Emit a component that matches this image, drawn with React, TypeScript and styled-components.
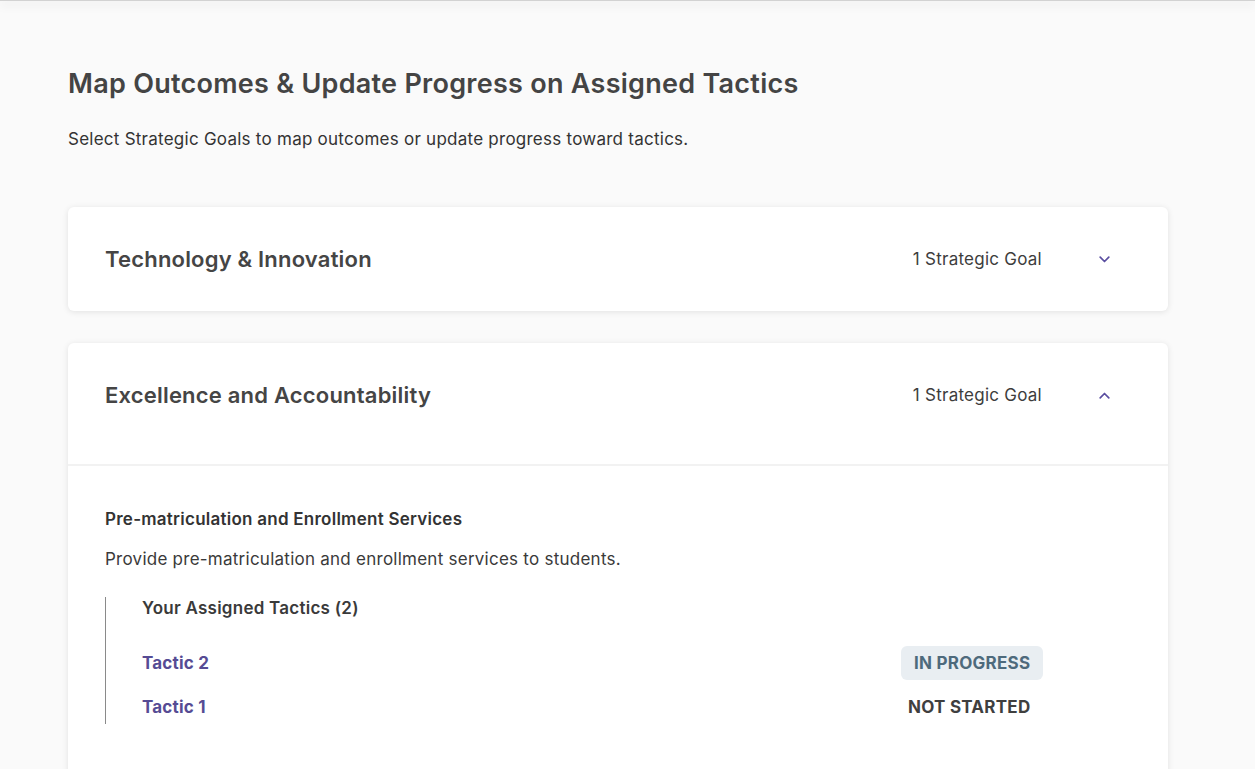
import React from 'react';
import styled, { createGlobalStyle } from 'styled-components';

const GlobalStyle = createGlobalStyle`
  html, body {
    margin: 0;
    padding: 0;
    background: #fafafa;
    font-family: Inter, 'Noto Sans', sans-serif;
    color: #3f3f3f;
  }
`;

type Tactic = { name: string; status: 'in-progress' | 'not-started' };

const tactics: Tactic[] = [
  { name: 'Tactic 2', status: 'in-progress' },
  { name: 'Tactic 1', status: 'not-started' },
];

const Chevron = ({ up }: { up?: boolean }) => (
  <svg width='11' height='7' viewBox='0 0 11 7' fill='none'>
    <path
      d={up ? 'M1.2 5.8 L5.5 1.5 L9.8 5.8' : 'M1.2 1.2 L5.5 5.5 L9.8 1.2'}
      stroke='#5a4ea0'
      strokeWidth='1.7'
      strokeLinecap='round'
      strokeLinejoin='round'
    />
  </svg>
);

const App = () => {
  return (
    <>
      <GlobalStyle />
      <TopShadow />
      <Page>
        <Title>Map Outcomes &amp; Update Progress on Assigned Tactics</Title>
        <SubTitle>Select Strategic Goals to map outcomes or update progress toward tactics.</SubTitle>

        <Card>
          <CardHeader>
            <CardTitle>Technology &amp; Innovation</CardTitle>
            <HeaderRight>
              <GoalCount>1 Strategic Goal</GoalCount>
              <ChevronBox>
                <Chevron />
              </ChevronBox>
            </HeaderRight>
          </CardHeader>
        </Card>

        <Card>
          <CardHeader>
            <CardTitle>Excellence and Accountability</CardTitle>
            <HeaderRight>
              <GoalCount>1 Strategic Goal</GoalCount>
              <ChevronBox>
                <Chevron up />
              </ChevronBox>
            </HeaderRight>
          </CardHeader>
          <CardBody>
            <GoalTitle>Pre-matriculation and Enrollment Services</GoalTitle>
            <GoalText>Provide pre-matriculation and enrollment services to students.</GoalText>
            <TacticsBlock>
              <TacticsHeading>Your Assigned Tactics (2)</TacticsHeading>
              <TacticList>
                {tactics.map((t) => (
                  <TacticRow key={t.name}>
                    <TacticLink href='#'>{t.name}</TacticLink>
                    <StatusCell>
                      <Status $active={t.status === 'in-progress'}>
                        {t.status === 'in-progress' ? 'IN PROGRESS' : 'NOT STARTED'}
                      </Status>
                    </StatusCell>
                  </TacticRow>
                ))}
              </TacticList>
            </TacticsBlock>
          </CardBody>
        </Card>
      </Page>
    </>
  );
};

export default App;

const TopShadow = styled.div`
  position: fixed;
  top: 0;
  left: 0;
  right: 0;
  height: 1px;
  background: #d2d2d2;
  box-shadow: 0 3px 10px rgba(0, 0, 0, 0.25);
  z-index: 2;
`;

const Page = styled.main`
  display: flex;
  flex-direction: column;
  width: 1100px;
  padding: 68px 0 0 68px;
`;

const Title = styled.h1`
  margin: 0;
  font-size: 27px;
  line-height: 32px;
  font-weight: 600;
  color: #444;
  letter-spacing: 0.27px;
`;

const SubTitle = styled.p`
  margin: 28px 0 57px;
  font-size: 17px;
  line-height: 22px;
  letter-spacing: 0.25px;
  color: #333;
`;

const Card = styled.section`
  background: #fff;
  border-radius: 6px;
  box-shadow: 0 1px 6px rgba(0, 0, 0, 0.1);
  margin-bottom: 32px;
  overflow: hidden;
`;

const CardHeader = styled.div`
  display: flex;
  justify-content: space-between;
  align-items: center;
  height: 104px;
  padding: 0 58px 0 37px;
`;

const CardTitle = styled.h2`
  margin: 0;
  font-size: 22px;
  font-weight: 600;
  letter-spacing: 0.2px;
  color: #454545;
`;

const HeaderRight = styled.div`
  display: flex;
  align-items: center;
  gap: 57px;
`;

const GoalCount = styled.span`
  font-size: 17px;
  letter-spacing: 0.25px;
  color: #3d3d3d;
`;

const ChevronBox = styled.span`
  display: flex;
  align-items: center;
  justify-content: center;
  width: 11px;
`;

const CardBody = styled.div`
  margin-top: 17px;
  border-top: 2px solid #f2f2f2;
  padding: 42px 37px 80px;
`;

const GoalTitle = styled.h3`
  margin: 0;
  font-size: 17px;
  line-height: 22px;
  font-weight: 600;
  letter-spacing: 0.25px;
  color: #333;
`;

const GoalText = styled.p`
  margin: 18px 0 27px;
  font-size: 17px;
  line-height: 22px;
  letter-spacing: 0.25px;
  color: #3a3a3a;
`;

const TacticsBlock = styled.div`
  border-left: 1px solid #8a8a8a;
  padding: 0 0 0 36px;
  width: 902px;
`;

const TacticsHeading = styled.h4`
  margin: 0;
  font-size: 17px;
  line-height: 22px;
  font-weight: 600;
  letter-spacing: 0.25px;
  color: #3a3a3a;
`;

const TacticList = styled.div`
  display: flex;
  flex-direction: column;
  gap: 10px;
  margin-top: 27px;
`;

const TacticRow = styled.div`
  display: grid;
  grid-template-columns: 1fr 143px;
  align-items: center;
  height: 34px;
`;

const TacticLink = styled.a`
  font-size: 17px;
  font-weight: 700;
  letter-spacing: 0.2px;
  color: #564b94;
  text-decoration: none;
`;

const StatusCell = styled.div`
  display: flex;
  justify-content: flex-start;
`;

const Status = styled.span<{ $active?: boolean }>`
  display: inline-flex;
  flex-shrink: 0;
  align-items: center;
  height: 34px;
  padding: 0 ${({ $active }) => ($active ? '13px' : '7px')};
  border-radius: 6px;
  white-space: nowrap;
  font-size: 17px;
  font-weight: 700;
  letter-spacing: 0.25px;
  background: ${({ $active }) => ($active ? '#e9eef2' : 'transparent')};
  color: ${({ $active }) => ($active ? '#4e6a7c' : '#3f3f3f')};
`;
